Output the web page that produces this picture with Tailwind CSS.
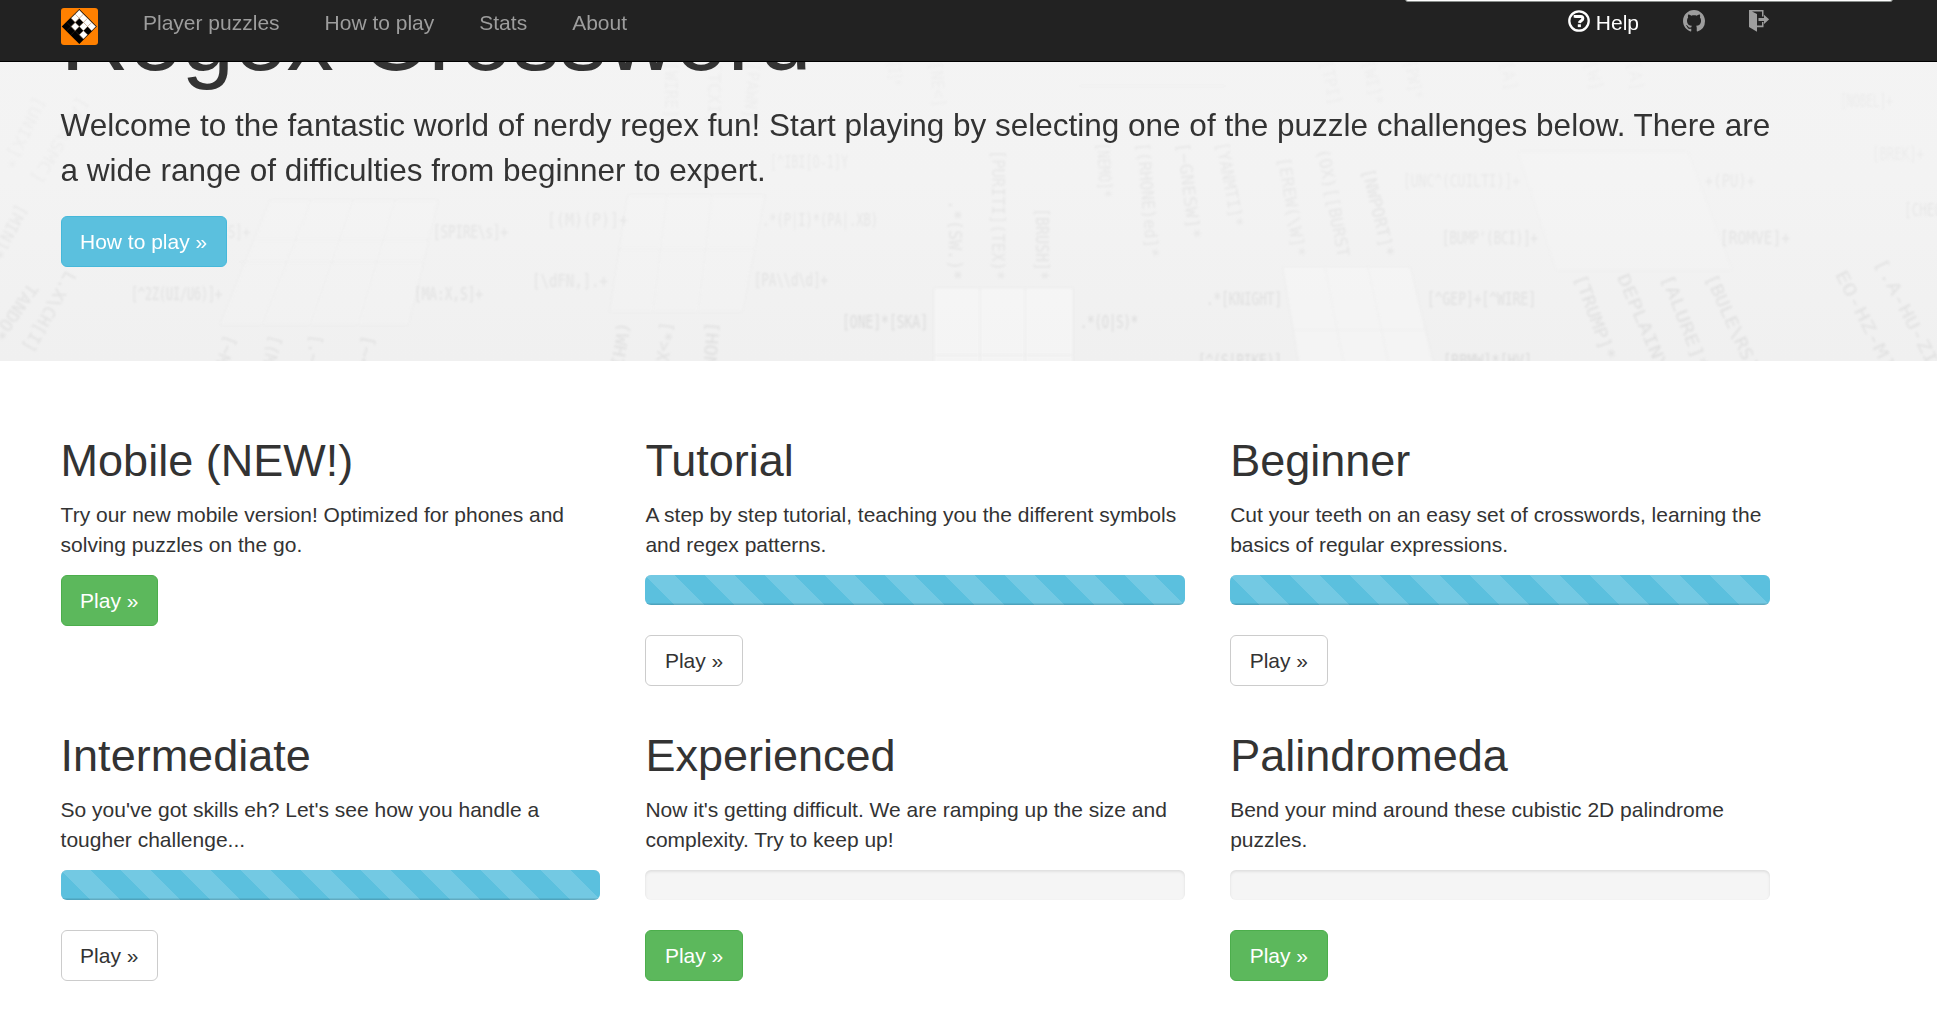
<!DOCTYPE html>
<html lang="en">
<head>
<meta charset="utf-8">
<title>Regex Crossword</title>
<script src="https://cdn.jsdelivr.net/npm/@tailwindcss/browser@4"></script>
</head>
<body class="h-[1033px] overflow-hidden bg-white font-['Liberation_Sans',Arial,sans-serif] text-[21px] leading-[30px] text-[#333]">

<nav class="absolute inset-x-0 top-0 z-10 flex h-[62px] items-start justify-between border-b border-black bg-[#222] pl-[61px] pr-[168px]">
  <div class="flex text-[#9d9d9d]">
    <a class="mt-2 mr-[45px] block h-[37px] w-[37px]">
      <svg width="37" height="37" viewBox="0 0 37 37">
        <rect width="37" height="37" rx="3" fill="#ff8000"/>
        <g transform="translate(18.3 2) rotate(45) scale(5.85)">
          <rect x="-.12" y="-.12" width="4.24" height="4.24" fill="#000"/>
          <g fill="#fff" stroke="#b98d6a" stroke-width=".06">
            <path d="M0 0h1v1H0zM1 0h1v1H1zM0 1h1v1H0zM2 0h1v1H2zM3 0h1v1H3zM2 1h1v1H2zM1 2h1v1H1zM3 2h1v1H3z"/>
          </g>
          <path d="M1 1V4M2 1V4M0 3H4M0 2H2" stroke="#5a4630" stroke-width=".06" fill="none"/>
        </g>
      </svg>
    </a>
    <div class="flex gap-[45px] pt-[7.5px]">
      <a>Player puzzles</a><a>How to play</a><a>Stats</a><a>About</a>
    </div>
  </div>
  <div class="flex pt-[7.5px] text-[#9d9d9d]">
    <a class="flex gap-[6px] text-white">
      <svg class="mt-[2px]" width="22" height="22" viewBox="0 0 22 22" fill="none" stroke="currentColor">
        <circle cx="11" cy="11" r="9.7" stroke-width="2.300"/>
        <path d="M7.200 7.700V6.600H12.800c1.600 0 2 .9 2 2.100c0 2-3 1.900-3.500 4.200" stroke-width="3"/>
        <path d="M9.800 15.700h3.100" stroke-width="2.800"/>
      </svg>Help</a>
    <svg class="mt-[2px] ml-[44px]" width="22" height="22" viewBox="0 0 16 16" fill="currentColor"><path d="M8 0C3.580 0 0 3.580 0 8c0 3.540 2.290 6.530 5.470 7.590.4.070.55-.17.55-.38 0-.19-.01-.82-.01-1.490-2.010.37-2.530-.49-2.690-.94-.09-.23-.48-.94-.82-1.130-.28-.15-.68-.52-.01-.53.63-.01 1.080.58 1.230.82.72 1.210 1.870.87 2.330.66.07-.52.28-.87.51-1.070-1.780-.2-3.640-.89-3.640-3.950 0-.87.31-1.590.82-2.150-.08-.2-.36-1.020.08-2.120 0 0 .67-.21 2.200.82.64-.18 1.320-.27 2-.27s1.360.09 2 .27c1.530-1.040 2.200-.82 2.200-.82.44 1.100.16 1.920.08 2.120.51.56.82 1.270.82 2.150 0 3.070-1.870 3.750-3.650 3.950.29.25.54.73.54 1.480 0 1.070-.01 1.930-.01 2.200 0 .21.15.46.55.38A8.010 8.010 0 0 0 16 8c0-4.420-3.580-8-8-8z"/></svg>
    <svg class="mt-[2px] ml-[44px]" width="20" height="22" viewBox="0 0 20 22" fill="currentColor">
      <path d="M0 0h14.500v6.500H13V1.500H3L8 4v17.700L0 17zM8 15.500h5V12h1.500v5.200H8zM9.500 8H15V4.800l5.200 4.600L15 14v-3H9.500z"/>
    </svg>
  </div>
</nav>
<div class="absolute top-[-7px] left-[1405px] z-20 h-[9px] w-[488px] rounded-[3px] border border-[#8a8f8c] bg-white"></div>

<header class="relative h-[361px] overflow-hidden bg-linear-to-b from-[#f4f4f4] via-[#f3f3f3] to-[#f0f0f0] pl-[60.6px]">
  <svg class="absolute inset-0" width="1937" height="361" viewBox="0 0 1937 361">
    <g class="blur-[0.8px]" fill="#fff" fill-opacity=".12" stroke="#e6e6e6" stroke-opacity=".3" stroke-width="1">
      <path d="M270 200H438L408 325H220ZM311 200 262 325M353 200 310 325M395 200 358 325M256 240H428M240 262H422"/>
      <path d="M628 195H765L742 312H610ZM667 195 653 312M712 195 698 312M618 249H753"/>
      <path fill-opacity=".3" stroke-opacity=".6" d="M934 288H1073V370H934ZM980 288V370M1025 288V370M934 355H1073"/>
      <path fill-opacity=".25" stroke-opacity=".4" d="M1283 267H1410L1435 370H1300ZM1325 267 1345 370M1368 267 1390 370M1292 330H1425"/>
      <path stroke-opacity=".15" d="M1518 152H1688L1732 270H1556ZM1532 190H1700M1545 232H1715"/>
      <path fill="none" d="M1080 86H1225"/>
    </g>
    <g id="clues" class="font-['DejaVu_Sans_Mono',monospace] text-[17px] blur-[1.2px]" fill="#8c8c8c"></g>
  </svg>
  <div class="relative w-[1710px]">
    <h1 class="mb-[14px] -mt-[14px] text-[94.5px] leading-[103px]">Regex Crossword</h1>
    <p class="mb-[23px] text-[31.5px] leading-[45px]">Welcome to the fantastic world of nerdy regex fun! Start playing by selecting one of the puzzle challenges below. There are a wide range of difficulties from beginner to expert.</p>
    <a class="inline-flex h-[51px] items-center rounded-[6px] border border-[#46b8da] bg-[#5bc0de] px-[18.4px] text-white">How to play »</a>
  </div>
</header>

<main id="cards" class="grid grid-cols-[repeat(3,539.8px)] grid-rows-[295px_295px] gap-x-[45px] pt-[75px] pl-[60.6px]"></main>

<script>
const stripes = 'bg-[linear-gradient(45deg,rgba(255,255,255,.15)_25%,transparent_25%,transparent_50%,rgba(255,255,255,.15)_50%,rgba(255,255,255,.15)_75%,transparent_75%,transparent)]';
const green = 'border-[#4cae4c] bg-[#5cb85c] text-white';
const plain = 'border-[#ccc] bg-white text-[#333]';
const levels = [
  ['Mobile (NEW!)', 'Try our new mobile version! Optimized for phones and solving puzzles on the go.', null, green],
  ['Tutorial', 'A step by step tutorial, teaching you the different symbols and regex patterns.', 100, plain],
  ['Beginner', 'Cut your teeth on an easy set of crosswords, learning the basics of regular expressions.', 100, plain],
  ['Intermediate', "So you've got skills eh? Let's see how you handle a tougher challenge...", 100, plain],
  ['Experienced', "Now it's getting difficult. We are ramping up the size and complexity. Try to keep up!", 0, green],
  ['Palindromeda', 'Bend your mind around these cubistic 2D palindrome puzzles.', 0, green],
];
document.getElementById('cards').innerHTML = levels.map(([title, text, done, style]) => `
  <section>
    <h2 class="mb-[14.5px] text-[45px] leading-[49.5px]">${title}</h2>
    <p class="mb-[15px]">${text}</p>
    ${done === null ? '' : `<div class="mb-[30px] h-[30px] overflow-hidden rounded-[6px] bg-[#f5f5f5] shadow-[inset_0_1.5px_3px_rgba(0,0,0,.1)]">
      <div class="h-full bg-[#5bc0de] bg-[length:60px_60px] shadow-[inset_0_-1.5px_0_rgba(0,0,0,.15)] ${stripes}" style="width:${done}%"></div>
    </div>`}
    <a class="flex h-[51px] w-fit items-center rounded-[6px] border px-[18.5px] ${style}">Play »</a>
  </section>`).join('');

// Faint clues printed on the banner: start x/y, end x/y, text, opacity
const clues = [
  [131,300,222,300,'[^2Z(UI/U6)]+',.17],[414,300,483,300,'[MA:X,S]+',.17],[228,238,250,238,'S]+',.12],
  [433,238,508,238,'[SPIRE\\s]+',.15],[547,226,628,226,'[(M)(P)]+',.13],[532,287,608,287,'[\\dFN,].+',.15],
  [770,168,848,168,'[^IBI[O-1]Y',.1],[762,226,878,226,'.*(P|I)*(PA|.XB)',.13],[754,286,828,286,'[PA\\\\d\\d]+',.16],
  [842,328,928,328,'[ONE]*[SKA]',.24],[1080,328,1138,328,'.*(O|S)*',.24],[1206,305,1282,305,'.*[KNIGHT]',.19],
  [1427,305,1536,305,'[^GEP]+[^WIRE]',.19],[1403,187,1520,187,'[UNC^(CUILTI)]+',.1],[1705,187,1755,187,'+(PU)+',.11],
  [1442,244,1538,244,"[BUMP'(BCI)]+",.15],[1720,244,1790,244,'[ROMVE]+',.15],[1840,107,1893,107,'[NOBEL]+',.08],
  [1872,160,1924,160,'[BREK]+',.08],[1904,216,1950,216,'[CHEO]',.12],[1198,367,1282,367,'[^(S|PIKE)]',.24],[1443,367,1532,367,'[BBMW]*[HV]',.24],
  [949,200,949,280,'.*(SW.)*',.15],[992,150,992,280,'[PURITI](TEX)*',.13],[1036,208,1036,280,'[BRUSH]*',.15],
  [1097,143,1100,198,'[NEMO]*',.12],[1137,143,1147,258,'[(RHONE)ed]*',.13],[1177,143,1189,240,'[~GNESW]*',.13],[1216,143,1232,228,'[YANMTI]*',.12],
  [1278,158,1294,258,'[EREW(\\W]*',.12],[1317,150,1338,258,'(OX)[[BURST',.13],[1362,170,1383,258,'[NWPORT]*',.15],
  [1574,277,1609,372,'[TRUMP]*.',.19],[1617,277,1658,372,'DEPLAINY',.19],[1661,277,1698,372,'[ALURE]*',.19],[1705,277,1748,372,'[BULE\\RS]',.19],
  [1835,274,1885,372,'EO-HZ-M]',.17],[1874,262,1928,366,'[.A-HU-ZI',.17],
  [29,282,-8,335,'TANDO*',.17],[66,270,22,348,'L.X\\CH[I]',.17],[18,203,-10,255,'[MIN]*',.12],
  [36,95,2,165,'[UNIX]*',.06],[80,95,30,180,'[ARASMC]',.06],
  [226,334,206,390,'[~MJU]',.18],[271,334,255,390,'[(M).]',.18],[311,334,303,390,'[.~+.]',.18],[364,334,352,390,'[~<M]',.18],
  [619,321,606,390,'(WHIX]',.18],[662,321,652,390,'[*>XOM]',.18],[707,321,702,390,'[HON]*',.2],
  [665,62,665,118,'[WIRE]',.06],[708,62,708,125,'[TCXI]',.06],[748,62,744,118,'[PAWN]',.06],[888,62,890,86,'[I]*',.06],[930,62,934,108,'[NE<]',.06],
  [1320,62,1330,106,'[TPI]',.06],[1362,62,1372,106,'[WI]*',.06],[1404,62,1412,100,'[PW]*',.06],[1500,62,1506,92,'[A]',.05],[1584,62,1592,92,'[W]',.05],[1627,62,1632,92,'[A]',.05],
];
document.getElementById('clues').innerHTML = clues.map(([x1, y1, x2, y2, text, o]) => {
  const len = Math.hypot(x2 - x1, y2 - y1), deg = Math.atan2(y2 - y1, x2 - x1) * 180 / Math.PI;
  return `<text transform="translate(${x1} ${y1}) rotate(${deg})" textLength="${len}" lengthAdjust="spacingAndGlyphs" opacity="${o * 0.85}">${text.replace(/</g, '&lt;')}</text>`;
}).join('');
</script>
</body>
</html>
